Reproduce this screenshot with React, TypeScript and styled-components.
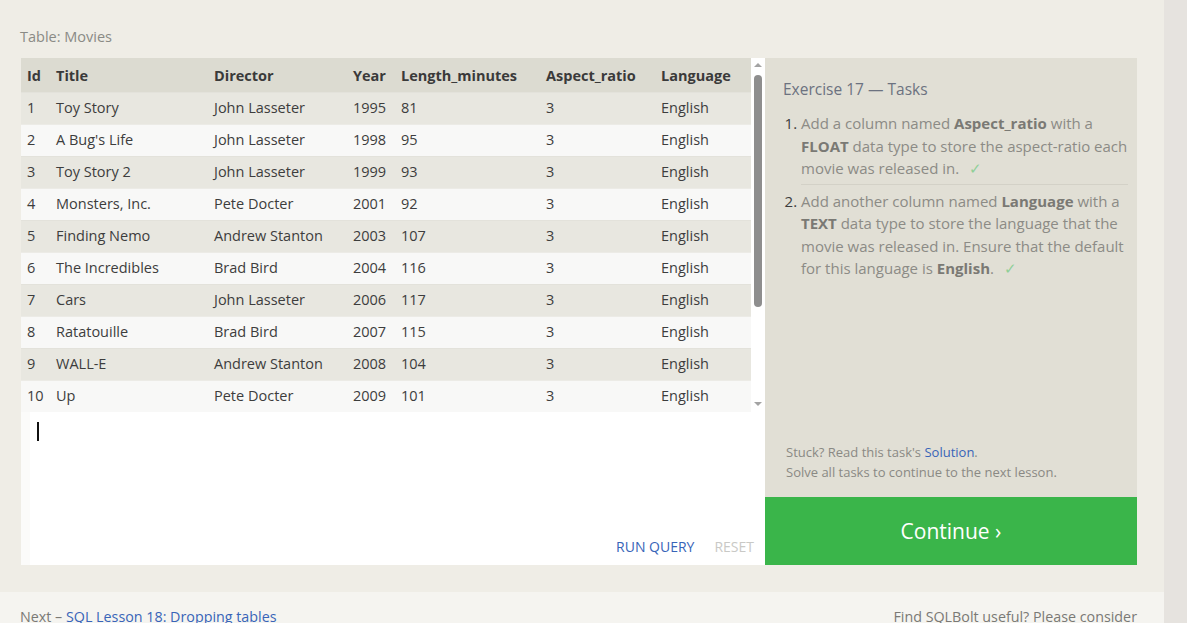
import React from "react";
import styled, { createGlobalStyle } from "styled-components";

const Global = createGlobalStyle`
  html, body { margin: 0; padding: 0; }
  body {
    background: #e6e3df;
    font-family: "Open Sans", "Noto Sans", sans-serif;
    overflow: hidden;
  }
`;

const Page = styled.div`
  display: flex;
  width: 1187px;
  height: 623px;
  overflow: hidden;
`;

const MainCol = styled.div`
  width: 1164px;
  display: flex;
  flex-direction: column;
  background: #efede6;
`;

const SideStrip = styled.div`
  flex: 1;
  background: #e6e3df;
`;

const Content = styled.div`
  padding: 26px 27px 27px 21px;
`;

const TableLabel = styled.div`
  font-size: 14.5px;
  color: #8a8a85;
  line-height: 22px;
  margin: 0 0 10px -1px;
`;

const Workspace = styled.div`
  display: flex;
  height: 507px;
`;

const LeftBox = styled.div`
  width: 744px;
  display: flex;
  flex-direction: column;
  background: #fff;
`;

const TableArea = styled.div`
  display: flex;
  height: 354px;
`;

const Table = styled.div`
  flex: 1;
  display: flex;
  flex-direction: column;
`;

const COLS = "29px 158px 139px 48px 145px 115px 1fr";

const HeadRow = styled.div`
  display: grid;
  grid-template-columns: ${COLS};
  height: 34px;
  align-items: center;
  background: #dcdbd1;
  font-weight: 700;
  color: #3a3a3a;
  font-size: 14.5px;
`;

const Row = styled.div<{ $odd: boolean }>`
  display: grid;
  grid-template-columns: ${COLS};
  height: 32px;
  padding-bottom: 2px;
  align-items: center;
  background: ${(p) => (p.$odd ? "#e8e7e0" : "#f8f8f7")};
  border-top: 1px solid ${(p) => (p.$odd ? "#e3e2db" : "#ecebe6")};
  box-sizing: border-box;
  color: #3d3d3d;
  font-size: 14.5px;
`;

const Cell = styled.div`
  padding-left: 6px;
  white-space: nowrap;
`;

const ScrollBar = styled.div`
  width: 14px;
  display: flex;
  flex-direction: column;
  align-items: center;
  background: #fff;
`;

const Arrow = styled.div<{ $down?: boolean }>`
  width: 0;
  height: 0;
  border-left: 4px solid transparent;
  border-right: 4px solid transparent;
  ${(p) =>
    p.$down
      ? "border-top: 4px solid #a3a3a3; margin-top: auto; margin-bottom: 6px;"
      : "border-bottom: 4px solid #a3a3a3; margin-top: 5px;"}
`;

const Thumb = styled.div`
  width: 8px;
  height: 232px;
  margin-top: 8px;
  border-radius: 4px;
  background: #8e8e8e;
`;

const Editor = styled.div`
  flex: 1;
  display: flex;
  flex-direction: column;
  border-left: 9px solid #fbfbfa;
  padding: 10px 11px 8px 7px;
`;

const Caret = styled.div`
  width: 2px;
  height: 19px;
  background: #111;
`;

const EditorActions = styled.div`
  margin-top: auto;
  display: flex;
  justify-content: flex-end;
  gap: 20px;
  font-size: 14px;
  line-height: 20px;
`;

const Action = styled.span<{ $muted?: boolean }>`
  color: ${(p) => (p.$muted ? "#c9c9c6" : "#3864b8")};
`;

const RightCol = styled.div`
  width: 372px;
  display: flex;
  flex-direction: column;
`;

const TaskPanel = styled.div`
  flex: 1;
  background: #e1dfd5;
  padding: 19px 7px 15px 18px;
  display: flex;
  flex-direction: column;
`;

const TaskTitle = styled.div`
  font-size: 15.5px;
  color: #6c7280;
  line-height: 24px;
  margin-bottom: 11px;
`;

const TaskList = styled.ol`
  margin: 0;
  padding: 0 2px 0 18px;
  font-size: 15px;
  line-height: 22.5px;
  color: #8c8b86;
`;

const TaskItem = styled.li<{ $last?: boolean }>`
  padding-bottom: ${(p) => (p.$last ? "0" : "4px")};
  margin-bottom: ${(p) => (p.$last ? "0" : "5px")};
  border-bottom: ${(p) => (p.$last ? "none" : "1px solid #d3d1c7")};
  &::marker { color: #3d3d3d; }
`;

const B = styled.b`
  color: #7a7974;
`;

const Check = styled.span`
  color: #8fcf98;
  margin-left: 10px;
`;

const Hints = styled.div`
  margin-top: auto;
  font-size: 13px;
  line-height: 20px;
  color: #8a8984;
  padding-left: 3px;
`;

const Link = styled.span`
  color: #3864b8;
`;

const ContinueButton = styled.div`
  height: 68px;
  background: #3ab54a;
  color: #fff;
  font-size: 21px;
  display: flex;
  align-items: center;
  justify-content: center;
`;

const Footer = styled.div`
  flex: 1;
  background: #f5f4f0;
  display: flex;
  justify-content: space-between;
  padding: 15px 27px 0 20px;
  font-size: 14.3px;
  color: #7a7975;
  line-height: 20px;
`;

const rows = [
  [1, "Toy Story", "John Lasseter", 1995, 81],
  [2, "A Bug's Life", "John Lasseter", 1998, 95],
  [3, "Toy Story 2", "John Lasseter", 1999, 93],
  [4, "Monsters, Inc.", "Pete Docter", 2001, 92],
  [5, "Finding Nemo", "Andrew Stanton", 2003, 107],
  [6, "The Incredibles", "Brad Bird", 2004, 116],
  [7, "Cars", "John Lasseter", 2006, 117],
  [8, "Ratatouille", "Brad Bird", 2007, 115],
  [9, "WALL-E", "Andrew Stanton", 2008, 104],
  [10, "Up", "Pete Docter", 2009, 101],
];

const headers = ["Id", "Title", "Director", "Year", "Length_minutes", "Aspect_ratio", "Language"];

export default function App() {
  return (
    <>
      <Global />
      <Page>
        <MainCol>
          <Content>
            <TableLabel>Table: Movies</TableLabel>
            <Workspace>
              <LeftBox>
                <TableArea>
                  <Table>
                    <HeadRow>
                      {headers.map((h) => (
                        <Cell key={h}>{h}</Cell>
                      ))}
                    </HeadRow>
                    {rows.map((r, i) => (
                      <Row key={r[0]} $odd={i % 2 === 0}>
                        <Cell>{r[0]}</Cell>
                        <Cell>{r[1]}</Cell>
                        <Cell>{r[2]}</Cell>
                        <Cell>{r[3]}</Cell>
                        <Cell>{r[4]}</Cell>
                        <Cell>3</Cell>
                        <Cell>English</Cell>
                      </Row>
                    ))}
                  </Table>
                  <ScrollBar>
                    <Arrow />
                    <Thumb />
                    <Arrow $down />
                  </ScrollBar>
                </TableArea>
                <Editor>
                  <Caret />
                  <EditorActions>
                    <Action>RUN QUERY</Action>
                    <Action $muted>RESET</Action>
                  </EditorActions>
                </Editor>
              </LeftBox>
              <RightCol>
                <TaskPanel>
                  <TaskTitle>Exercise 17 — Tasks</TaskTitle>
                  <TaskList>
                    <TaskItem>
                      Add a column named <B>Aspect_ratio</B> with a <B>FLOAT</B> data type to store the
                      aspect-ratio each movie was released in.<Check>✓</Check>
                    </TaskItem>
                    <TaskItem $last>
                      Add another column named <B>Language</B> with a <B>TEXT</B> data type to store the
                      language that the movie was released in. Ensure that the default for this language is{" "}
                      <B>English</B>.<Check>✓</Check>
                    </TaskItem>
                  </TaskList>
                  <Hints>
                    <div>
                      Stuck? Read this task's <Link>Solution</Link>.
                    </div>
                    <div>Solve all tasks to continue to the next lesson.</div>
                  </Hints>
                </TaskPanel>
                <ContinueButton>Continue ›</ContinueButton>
              </RightCol>
            </Workspace>
          </Content>
          <Footer>
            <span>
              Next – <Link>SQL Lesson 18: Dropping tables</Link>
            </span>
            <span>Find SQLBolt useful? Please consider</span>
          </Footer>
        </MainCol>
        <SideStrip />
      </Page>
    </>
  );
}
